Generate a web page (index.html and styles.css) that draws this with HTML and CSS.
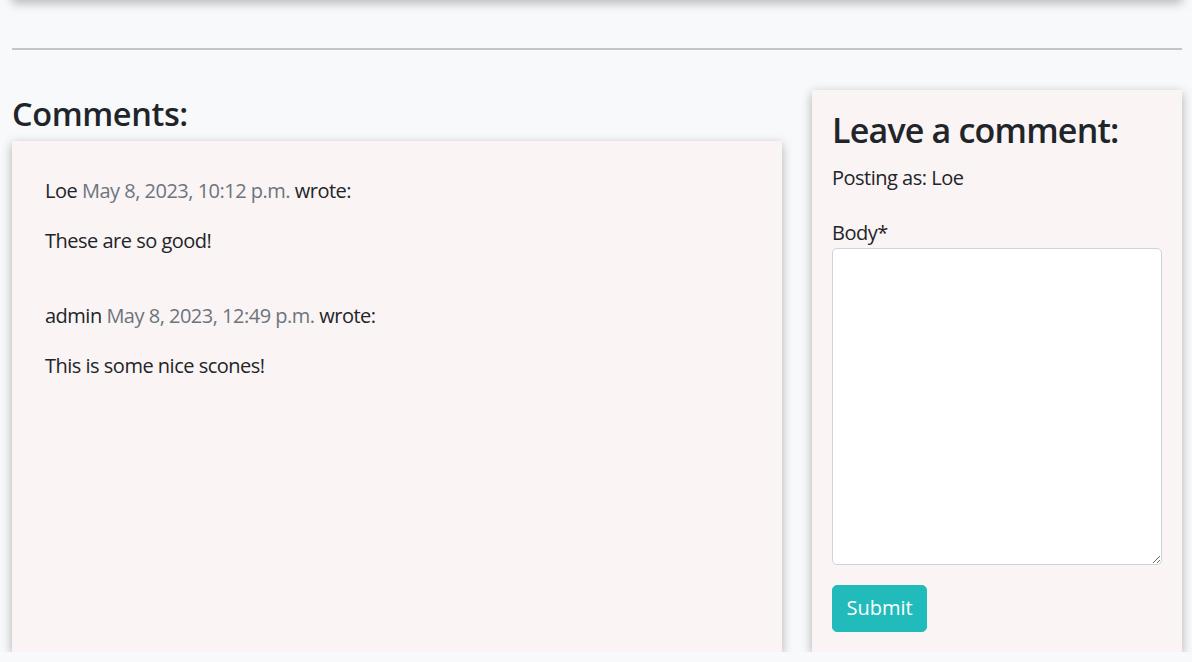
FILE: index.html
```html
<!DOCTYPE html>
<html lang="en">
<head>
<meta charset="utf-8">
<title>Comments</title>
<link rel="stylesheet" href="styles.css">
</head>
<body>
<div class="container">
  <div class="post-card"></div>
  <hr class="divider">
  <div class="row">
    <div class="col-comments">
      <h3 class="section-title">Comments:</h3>
      <div class="card comments-card">
        <div class="comment">
          <p class="comment-meta">Loe <span class="comment-date">May 8, 2023, 10:12 p.m.</span> wrote:</p>
          <p class="comment-body">These are so good!</p>
        </div>
        <div class="comment">
          <p class="comment-meta">admin <span class="comment-date">May 8, 2023, 12:49 p.m.</span> wrote:</p>
          <p class="comment-body">This is some nice scones!</p>
        </div>
      </div>
    </div>
    <div class="col-form">
      <div class="card form-card">
        <h3 class="form-title">Leave a comment:</h3>
        <p class="posting-as">Posting as: Loe</p>
        <form class="comment-form">
          <label class="form-label" for="body">Body*</label>
          <textarea id="body" class="form-textarea"></textarea>
          <button type="button" class="btn-submit">Submit</button>
        </form>
      </div>
    </div>
  </div>
</div>
</body>
</html>
```
FILE: styles.css
```css
* { box-sizing: border-box; }

html, body {
  margin: 0;
  padding: 0;
}

body {
  background: #f8f9fa;
  color: #212529;
  font-family: "Open Sans", "Noto Sans", sans-serif;
  font-size: 20px;
  line-height: 1.5;
  letter-spacing: -0.5px;
  overflow: hidden;
}

.container {
  width: 1170px;
  margin-left: 12px;
}

.post-card {
  height: 60px;
  margin-top: -61px;
  background: #faf4f4;
  box-shadow: 0 4px 10px rgba(0, 0, 0, 0.28);
}

.divider {
  margin: 49px 0 0;
  border: 0;
  border-top: 2px solid #c4c5c6;
  height: 0;
}

.row {
  display: flex;
  gap: 30px;
  margin-top: 40px;
  align-items: stretch;
}

.col-comments {
  width: 770px;
  display: flex;
  flex-direction: column;
}

.col-form {
  width: 370px;
}

.card {
  background: #faf4f4;
  box-shadow: 0 3px 10px rgba(0, 0, 0, 0.3);
}

.section-title {
  font-size: 32.5px;
  font-weight: 600;
  letter-spacing: -0.4px;
  line-height: 1.2;
  margin: 4px 0 8px;
}

.comments-card {
  flex: 1;
  padding: 35px 33px 33px;
}

.comment {
  padding-bottom: 25px;
}

.comment p {
  margin: 0 0 20px;
}

.comment-date {
  color: #6c757d;
}

.form-card {
  padding: 20px;
}

.form-title {
  font-size: 34px;
  font-weight: 600;
  letter-spacing: -0.8px;
  line-height: 1.2;
  margin: 0 0 12px;
}

.posting-as {
  margin: 0 0 25px;
}

.comment-form {
  display: flex;
  flex-direction: column;
  align-items: flex-start;
}

.form-label {
  display: block;
}

.form-textarea {
  width: 330px;
  height: 317px;
  border: 1px solid #ced4da;
  border-radius: 5px;
  background: #fff;
  font: inherit;
  margin: 0 0 20px;
}

.btn-submit {
  background: #22bbbb;
  border: 1px solid #22bbbb;
  color: #fff;
  font: inherit;
  line-height: 30px;
  padding: 7.5px 13.5px;
  border-radius: 5px;
}
```
